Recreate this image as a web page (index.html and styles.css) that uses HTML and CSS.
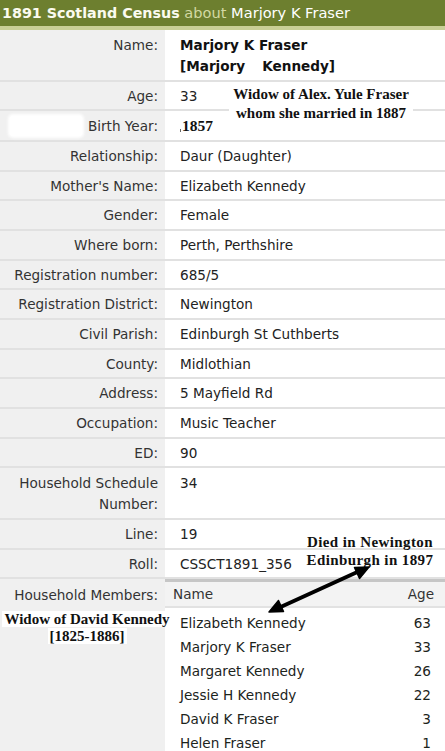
FILE: index.html
```html
<!DOCTYPE html>
<html>
<head>
<meta charset="utf-8">
<link rel="stylesheet" href="styles.css">
</head>
<body>
<div class="page">
  <div class="title"><b>1891 Scotland Census</b> <span class="about">about</span> <span class="who">Marjory K Fraser</span></div>
  <div class="records">
    <div class="row two">
      <div class="label">Name:</div>
      <div class="value strong">Marjory K Fraser<br>[Marjory<span class="gap"></span>Kennedy]</div>
    </div>
    <div class="row"><div class="label">Age:</div><div class="value">33</div></div>
    <div class="row"><div class="label blotted"><span class="blot"></span>Birth Year:</div><div class="value"><span class="tick"></span><span class="hand">1857</span></div></div>
    <div class="row"><div class="label">Relationship:</div><div class="value">Daur (Daughter)</div></div>
    <div class="row"><div class="label">Mother's Name:</div><div class="value">Elizabeth Kennedy</div></div>
    <div class="row"><div class="label">Gender:</div><div class="value">Female</div></div>
    <div class="row"><div class="label">Where born:</div><div class="value">Perth, Perthshire</div></div>
    <div class="row"><div class="label">Registration number:</div><div class="value">685/5</div></div>
    <div class="row"><div class="label">Registration District:</div><div class="value">Newington</div></div>
    <div class="row"><div class="label">Civil Parish:</div><div class="value">Edinburgh St Cuthberts</div></div>
    <div class="row"><div class="label">County:</div><div class="value">Midlothian</div></div>
    <div class="row"><div class="label">Address:</div><div class="value">5 Mayfield Rd</div></div>
    <div class="row"><div class="label">Occupation:</div><div class="value">Music Teacher</div></div>
    <div class="row"><div class="label">ED:</div><div class="value">90</div></div>
    <div class="row two"><div class="label">Household Schedule Number:</div><div class="value">34</div></div>
    <div class="row"><div class="label">Line:</div><div class="value">19</div></div>
    <div class="row"><div class="label">Roll:</div><div class="value">CSSCT1891_356</div></div>
    <div class="row household">
      <div class="label hh-label">Household Members:</div>
      <div class="value hh">
        <div class="hh-head"><span>Name</span><span>Age</span></div>
        <div class="hh-list">
          <div class="member"><span>Elizabeth Kennedy</span><span>63</span></div>
          <div class="member"><span>Marjory K Fraser</span><span>33</span></div>
          <div class="member"><span>Margaret Kennedy</span><span>26</span></div>
          <div class="member"><span>Jessie H Kennedy</span><span>22</span></div>
          <div class="member"><span>David K Fraser</span><span>3</span></div>
          <div class="member"><span>Helen Fraser</span><span>1</span></div>
        </div>
      </div>
    </div>
  </div>

  <div class="note note-alex">Widow of Alex. Yule Fraser<br>whom she married in 1887</div>
  <div class="note note-died">Died in Newington<br>Edinburgh in 1897</div>
  <div class="note note-david"><span>Widow of David Kennedy</span><br><span>[1825-1886]</span></div>
  <svg class="arrow" width="120" height="60" viewBox="260 560 120 60" aria-hidden="true">
    <line x1="279" y1="607.8" x2="359" y2="571.2" stroke="#000" stroke-width="4" stroke-linecap="round"/>
    <polygon points="269,612 283.5,611.5 278.5,600.5" fill="#000" stroke="#000" stroke-width="1.5" stroke-linejoin="round"/>
    <polygon points="369,567 354.5,567.5 359.5,578.5" fill="#000" stroke="#000" stroke-width="1.5" stroke-linejoin="round"/>
  </svg>
</div>
</body>
</html>
```

FILE: styles.css
```css
html, body {
  margin: 0;
  padding: 0;
  background: #fff;
}

.page {
  position: relative;
  width: 445px;
  height: 751px;
  overflow: hidden;
  font-family: "DejaVu Sans", Verdana, sans-serif;
  font-size: 13.6px;
  color: #222;
}

.title {
  height: 26px;
  line-height: 25px;
  background: #6d7f2f;
  color: #fff;
  padding-left: 2px;
  border-bottom: 4px solid #c9cf96;
  white-space: nowrap;
  font-size: 14.6px;
}

.title b {
  font-size: 14.3px;
  color: #fbfbef;
}

.about {
  color: #d3d9a3;
}

.records {
  display: flex;
  flex-direction: column;
}

.row {
  display: flex;
  border-bottom: 2px solid #e1e1e1;
}

.label {
  width: 165px;
  flex: none;
  box-sizing: border-box;
  background: #f0f0f0;
  text-align: right;
  padding: 4px 7px 2.7px 10px;
  line-height: 21px;
  color: #333;
}

.value {
  flex: 1;
  background: #fff;
  padding: 4px 0 2.7px 15px;
  line-height: 21px;
  color: #222;
}

.row.two .label,
.row.two .value {
  padding-top: 5px;
  padding-bottom: 2.5px;
}

.strong {
  font-weight: bold;
  color: #111;
}

.gap {
  display: inline-block;
  width: 17px;
}

.blotted {
  display: flex;
  align-items: center;
  justify-content: space-between;
  padding-left: 10px;
}

.blot {
  display: block;
  width: 72px;
  height: 20px;
  background: #fff;
  border-radius: 3px;
  box-shadow: 0 0 3px 2px #fff;
}

.tick {
  display: inline-block;
  width: 1px;
  height: 3px;
  background: #666;
  margin-right: 1px;
  vertical-align: -1px;
}

.hand {
  font-family: "Liberation Serif", "Times New Roman", serif;
  font-weight: bold;
  font-size: 15.5px;
  color: #111;
}

.household {
  border-bottom: 0;
  flex: 1;
}

.hh-label {
  padding-top: 6px;
}

.hh {
  padding: 0;
}

.hh-head {
  display: flex;
  justify-content: space-between;
  border-top: 3px solid #c6c6c6;
  border-bottom: 2px solid #e2e2e2;
  background: #f3f3f3;
  height: 24px;
  line-height: 24px;
  padding: 0 11px 0 8px;
  color: #333;
}

.hh-list {
  padding-top: 3px;
}

.member {
  display: flex;
  justify-content: space-between;
  line-height: 24px;
  padding: 0 14px 0 15px;
  color: #1c241c;
}

.note {
  position: absolute;
  font-family: "Liberation Serif", "Times New Roman", serif;
  font-weight: bold;
  font-size: 15px;
  color: #111;
  text-align: center;
  white-space: nowrap;
}

.note-alex {
  left: 229px;
  top: 85px;
  width: 184px;
  line-height: 19px;
  background: #fff;
}

.note-died {
  left: 306px;
  top: 533px;
  width: 128px;
  line-height: 18px;
  letter-spacing: 0.4px;
}

.note-david {
  left: 2px;
  top: 611px;
  width: 170px;
  line-height: 17px;
}

.note-david span {
  background: #fff;
  padding: 0 2px;
}

.arrow {
  position: absolute;
  left: 260px;
  top: 560px;
}
```
